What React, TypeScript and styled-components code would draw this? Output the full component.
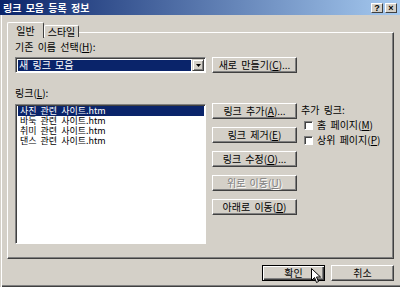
import styled, { createGlobalStyle } from "styled-components";

const GlobalStyle = createGlobalStyle`
    html, body {
        margin: 0;
        padding: 0;
        background: #d4d0c8;
    }
    * {
        box-sizing: border-box;
    }
`;

const links = [
    "사진 관련 사이트.htm",
    "바둑 관련 사이트.htm",
    "취미 관련 사이트.htm",
    "댄스 관련 사이트.htm",
];

export default function App() {
    return (
        <Window>
            <GlobalStyle />
            <TitleBar>
                <span className="title">링크 모음 등록 정보</span>
                <CaptionButtons>
                    <CaptionButton>?</CaptionButton>
                    <CaptionButton>×</CaptionButton>
                </CaptionButtons>
            </TitleBar>

            <TabRow>
                <Tab $active>일반</Tab>
                <Tab>스타일</Tab>
            </TabRow>

            <Panel>
                <FieldLabel>
                    기존 이름 선택(<u>H</u>):
                </FieldLabel>
                <Row>
                    <Combo>
                        <ComboValue>새 링크 모음</ComboValue>
                        <ComboArrow>
                            <svg width="5" height="3" viewBox="0 0 5 3">
                                <path d="M0 0h5L2.5 3z" fill="#000" />
                            </svg>
                        </ComboArrow>
                    </Combo>
                    <Button>
                        새로 만들기(<u>C</u>)...
                    </Button>
                </Row>

                <FieldLabel className="second">
                    링크(<u>L</u>):
                </FieldLabel>
                <Row className="main">
                    <ListBox>
                        {links.map((link, i) => (
                            <ListItem key={link} $selected={i === 0}>
                                {link}
                            </ListItem>
                        ))}
                    </ListBox>
                    <ButtonColumn>
                        <Button>
                            링크 추가(<u>A</u>)...
                        </Button>
                        <Button>
                            링크 제거(<u>E</u>)
                        </Button>
                        <Button>
                            링크 수정(<u>O</u>)...
                        </Button>
                        <Button $disabled>
                            위로 이동(<u>U</u>)
                        </Button>
                        <Button>
                            아래로 이동(<u>D</u>)
                        </Button>
                    </ButtonColumn>
                    <ExtraLinks>
                        <span>추가 링크:</span>
                        <CheckRow>
                            <CheckBox />
                            <span>
                                홈 페이지(<u>M</u>)
                            </span>
                        </CheckRow>
                        <CheckRow>
                            <CheckBox />
                            <span>
                                상위 페이지(<u>P</u>)
                            </span>
                        </CheckRow>
                    </ExtraLinks>
                </Row>
            </Panel>

            <Footer>
                <Button $default $wide>
                    확인
                </Button>
                <Button $wide>취소</Button>
            </Footer>

            <Cursor width="10" height="16" viewBox="0 0 10 16">
                <path
                    d="M0.5 0.5v12l3-3 2 5 2-1-2-4.5h4z"
                    fill="#fff"
                    stroke="#000"
                    strokeWidth="1"
                />
            </Cursor>
        </Window>
    );
}

const Window = styled.div`
    position: relative;
    width: 400px;
    height: 287px;
    background: #d4d0c8;
    font-family: "Noto Sans CJK KR", "Liberation Sans", sans-serif;
    font-size: 10px;
    color: #000;
    overflow: hidden;
    box-shadow: inset 1px 0 0 #d4d0c8, inset 2px 0 0 #fff,
        inset 0 -1px 0 #404040, inset 0 -2px 0 #808080;
`;

const TitleBar = styled.div`
    height: 15px;
    display: flex;
    align-items: center;
    justify-content: space-between;
    padding: 0 3px 0 3px;
    background: linear-gradient(to right, #0a246a, #a6caf0);

    .title {
        color: #fff;
        font-weight: bold;
        font-size: 10px;
        line-height: 15px;
        word-spacing: 2px;
    }
`;

const CaptionButtons = styled.div`
    display: flex;
    gap: 2px;
`;

const CaptionButton = styled.div`
    width: 12px;
    height: 10px;
    background: #d4d0c8;
    border: 1px solid;
    border-color: #fff #404040 #404040 #fff;
    font-family: "Liberation Sans", sans-serif;
    font-weight: bold;
    font-size: 9px;
    line-height: 8px;
    text-align: center;
`;

const TabRow = styled.div`
    display: flex;
    align-items: flex-end;
    height: 19px;
    padding-left: 7px;
    margin-top: 3px;
    position: relative;
    z-index: 1;
`;

const Tab = styled.div<{ $active?: boolean }>`
    width: ${(p) => (p.$active ? "37px" : "35px")};
    height: ${(p) => (p.$active ? "16px" : "12px")};
    margin-bottom: ${(p) => (p.$active ? "-1px" : "0")};
    background: #d4d0c8;
    border-left: 1px solid #fff;
    border-top: 1px solid #fff;
    border-right: 1px solid #404040;
    border-radius: 2px 2px 0 0;
    display: flex;
    align-items: ${(p) => (p.$active ? "flex-start" : "center")};
    justify-content: center;
    padding-top: ${(p) => (p.$active ? "2px" : "0")};
    line-height: 11px;
`;

const Panel = styled.div`
    margin: -5px 6px 0 7px;
    height: 227px;
    border-left: 1px solid #fff;
    border-top: 1px solid #fff;
    border-right: 1px solid #404040;
    border-bottom: 1px solid #404040;
    box-shadow: inset -1px -1px 0 #808080;
    padding: 8px 0 0 7px;
`;

const FieldLabel = styled.div`
    height: 12px;
    line-height: 12px;
    margin-bottom: 4px;
    word-spacing: 2px;

    &.second {
        margin-top: 14px;
    }
`;

const Row = styled.div`
    display: flex;
    gap: 6px;
    align-items: flex-start;
`;

const Combo = styled.div`
    width: 191px;
    height: 16px;
    display: flex;
    background: #fff;
    border: 1px solid;
    border-color: #808080 #fff #fff #808080;
    box-shadow: inset 1px 1px 0 #404040;
    padding: 2px 1px 1px 2px;
`;

const ComboValue = styled.div`
    flex: 1;
    background: #0a246a;
    color: #fff;
    line-height: 10px;
    padding-left: 1px;
    word-spacing: 2px;
`;

const ComboArrow = styled.div`
    width: 12px;
    margin: -1px 0 0 1px;
    background: #d4d0c8;
    border: 1px solid;
    border-color: #d4d0c8 #404040 #404040 #d4d0c8;
    box-shadow: inset 1px 1px 0 #fff, inset -1px -1px 0 #808080;
    display: flex;
    align-items: center;
    justify-content: center;
`;

const Button = styled.div<{ $disabled?: boolean; $default?: boolean; $wide?: boolean }>`
    width: ${(p) => (p.$wide ? "63px" : "85px")};
    height: 16px;
    background: #d4d0c8;
    border: 1px solid;
    border-color: ${(p) =>
        p.$default ? "#000" : "#fff #404040 #404040 #fff"};
    box-shadow: ${(p) =>
        p.$default
            ? "inset 1px 1px 0 #fff, inset -1px -1px 0 #404040, inset -2px -2px 0 #808080"
            : "inset -1px -1px 0 #808080"};
    display: flex;
    align-items: center;
    justify-content: center;
    line-height: 12px;
    word-spacing: 2px;
    white-space: nowrap;
    color: ${(p) => (p.$disabled ? "#808080" : "#000")};
    text-shadow: ${(p) => (p.$disabled ? "1px 1px 0 #fff" : "none")};
`;

const ListBox = styled.div`
    width: 191px;
    height: 140px;
    margin-top: 1px;
    background: #fff;
    border: 1px solid;
    border-color: #808080 #fff #fff #808080;
    box-shadow: inset 1px 1px 0 #404040;
    padding: 1px 1px 0 2px;
`;

const ListItem = styled.div<{ $selected?: boolean }>`
    height: 10px;
    font-size: 9px;
    line-height: 10px;
    padding-left: 2px;
    word-spacing: 2px;
    white-space: nowrap;
    background: ${(p) => (p.$selected ? "#0a246a" : "transparent")};
    color: ${(p) => (p.$selected ? "#fff" : "#000")};
`;

const ButtonColumn = styled.div`
    display: flex;
    flex-direction: column;
    gap: 8px;
`;

const ExtraLinks = styled.div`
    display: flex;
    flex-direction: column;
    margin-left: -2px;
    padding-top: 1px;
    line-height: 12px;
    word-spacing: 2px;
`;

const CheckRow = styled.div`
    display: flex;
    align-items: center;
    gap: 4px;
    margin-left: 3px;
    margin-top: 3px;
`;

const CheckBox = styled.span`
    width: 9px;
    height: 9px;
    background: #fff;
    border: 1px solid;
    border-color: #808080 #fff #fff #808080;
    box-shadow: inset 1px 1px 0 #404040;
`;

const Footer = styled.div`
    display: flex;
    justify-content: flex-end;
    gap: 6px;
    padding: 6px 6px 0 0;
`;

const Cursor = styled.svg`
    position: absolute;
    left: 311px;
    top: 268px;
`;
